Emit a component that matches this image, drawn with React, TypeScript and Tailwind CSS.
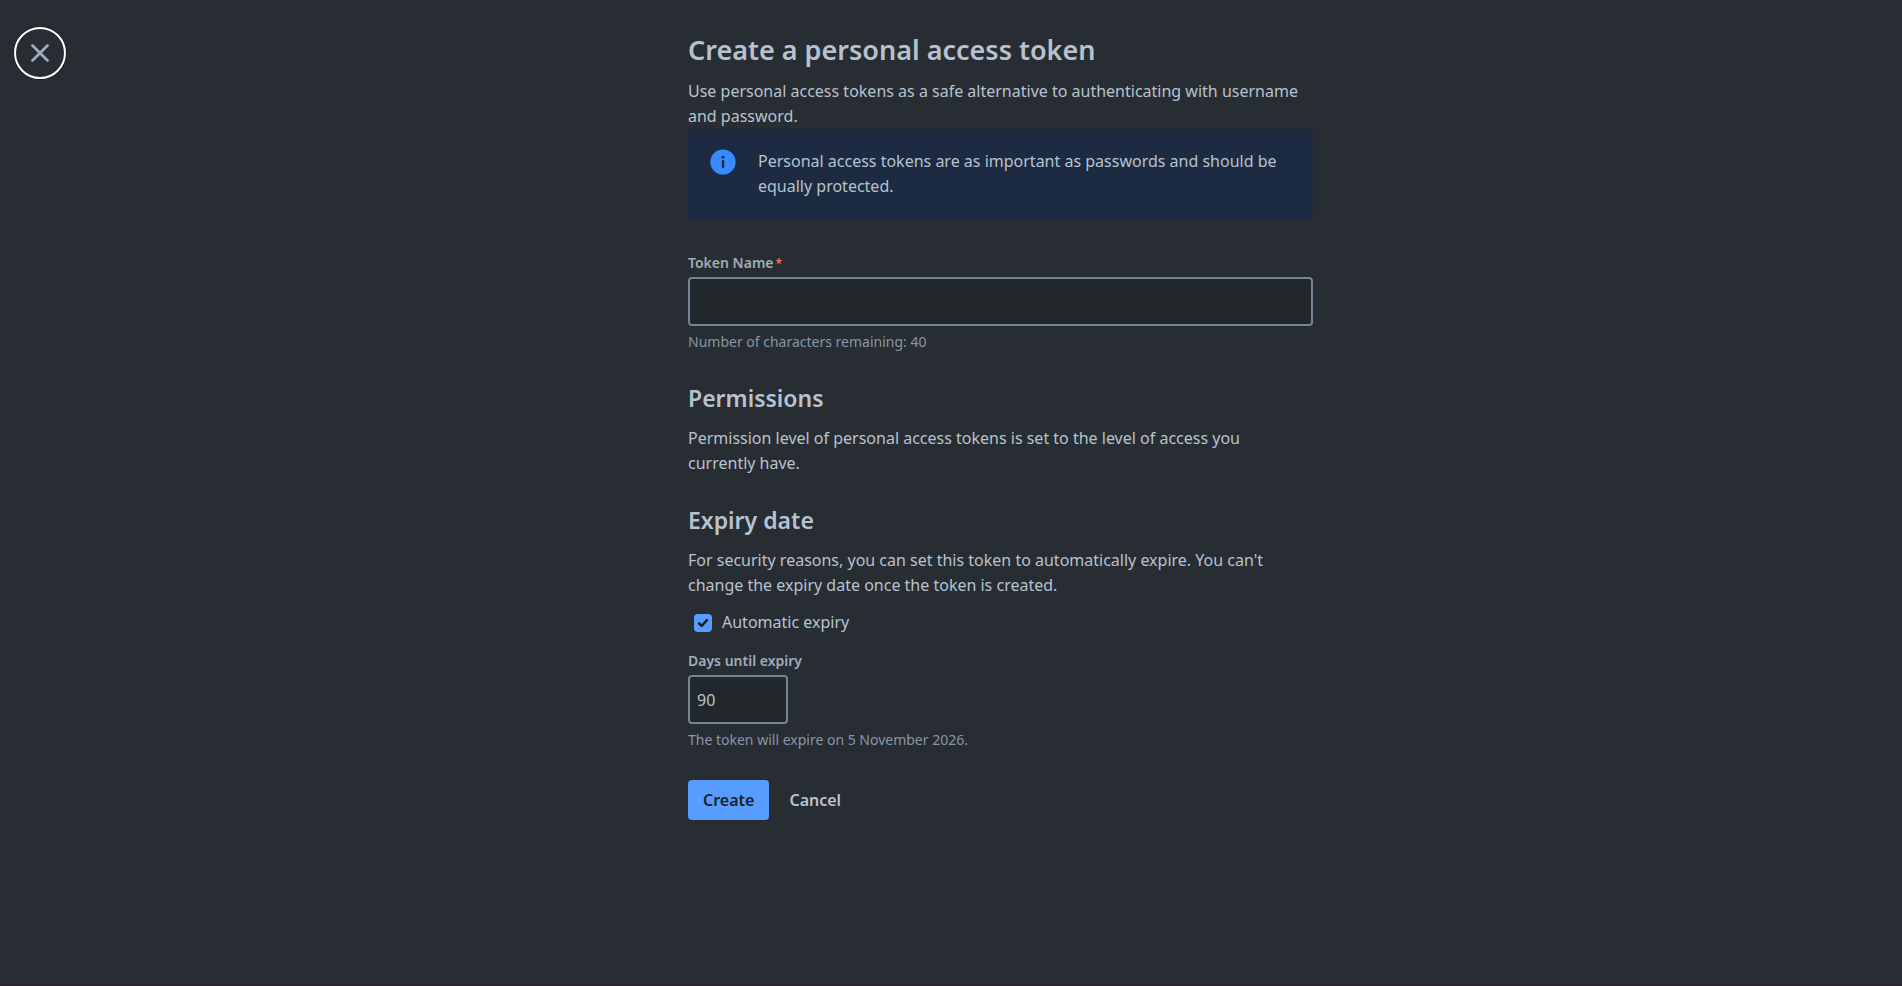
import { useState } from "react";
import type { ReactNode } from "react";

function CloseIcon() {
  return (
    <svg width="20" height="20" viewBox="0 0 20 20" fill="none" aria-hidden="true">
      <path d="M2.5 2.5l15 15M17.5 2.5l-15 15" stroke="#9fadbc" strokeWidth="2.7" strokeLinecap="round" />
    </svg>
  );
}

function InfoIcon() {
  return (
    <svg className="shrink-0" width="26" height="26" viewBox="0 0 26 26" aria-hidden="true">
      <circle cx="13" cy="13" r="12.6" fill="#388bff" />
      <circle cx="13" cy="8.2" r="1.4" fill="#1c2b41" />
      <rect x="11.8" y="11" width="2.5" height="8" rx="1" fill="#1c2b41" />
    </svg>
  );
}

function CheckIcon() {
  return (
    <svg
      className="pointer-events-none col-start-1 row-start-1 hidden peer-checked:block"
      width="18"
      height="18"
      viewBox="0 0 18 18"
      fill="none"
      aria-hidden="true"
    >
      <path d="M5 9.3l2.7 2.6L13 6.2" stroke="#1d2125" strokeWidth="2.6" strokeLinecap="round" strokeLinejoin="round" />
    </svg>
  );
}

function Section({ title, children }: { title: string; children: ReactNode }) {
  return (
    <section className="mt-7">
      <h2 className="text-[23px] leading-8 font-semibold text-[#b6c2cf]">{title}</h2>
      <p className="mt-3">{children}</p>
    </section>
  );
}

const labelClass = "block text-sm leading-5 font-semibold text-[#9fadbc]";
const inputClass =
  "mt-1 block h-[49px] rounded border-2 border-[#738496] bg-[#22272b] px-[7px] text-base text-[#b6c2cf] outline-none";
const hintClass = "mt-1 text-sm leading-6 text-[#8696a7]";

const MAX_LENGTH = 40;

export default function App() {
  const [name, setName] = useState("");
  const [autoExpiry, setAutoExpiry] = useState(true);
  const [days, setDays] = useState("90");

  return (
    <div className="flex min-h-screen border-b border-[#2a2432] bg-[#282d33] font-['Noto_Sans',sans-serif] text-base leading-[25px] text-[#b6c2cf]">
      <aside className="w-[99px] shrink-0 pt-[27px] pl-3.5">
        <button
          type="button"
          aria-label="Close"
          className="flex size-[52px] items-center justify-center rounded-full border-2 border-white ring-1 ring-[#1d2125]"
        >
          <CloseIcon />
        </button>
      </aside>

      <main className="flex grow justify-center">
        <div className="w-full max-w-[625px] pt-8">
          <h1 className="text-[27px] leading-9 font-semibold">Create a personal access token</h1>
          <p className="mt-[11px]">
            Use personal access tokens as a safe alternative to authenticating with username and
            password.
          </p>

          <div className="flex items-start gap-[22px] rounded bg-[#1c2b41] py-5 pr-5 pl-[22px]">
            <InfoIcon />
            <p>
              Personal access tokens are as important as passwords and should be equally protected.
            </p>
          </div>

          <form onSubmit={(e) => e.preventDefault()}>
            <div className="mt-[34px]">
              <label htmlFor="token-name" className={labelClass}>
                Token Name
                <span className="ml-0.5 text-xs text-[#f87168]">*</span>
              </label>
              <input
                id="token-name"
                type="text"
                maxLength={MAX_LENGTH}
                value={name}
                onChange={(e) => setName(e.target.value)}
                className={`${inputClass} w-full`}
              />
              <p className={hintClass}>
                Number of characters remaining: {MAX_LENGTH - name.length}
              </p>
            </div>

            <Section title="Permissions">
              Permission level of personal access tokens is set to the level of access you
              <br />
              currently have.
            </Section>

            <Section title="Expiry date">
              For security reasons, you can set this token to automatically expire. You can't
              <br />
              change the expiry date once the token is created.
            </Section>

            <label className="mt-3 flex items-center gap-2.5 pl-1.5">
              <span className="grid">
                <input
                  type="checkbox"
                  checked={autoExpiry}
                  onChange={(e) => setAutoExpiry(e.target.checked)}
                  className="peer col-start-1 row-start-1 size-[18px] appearance-none rounded border-2 border-[#738496] bg-[#22272b] checked:border-[#579dff] checked:bg-[#579dff]"
                />
                <CheckIcon />
              </span>
              Automatic expiry
            </label>

            <div className="mt-4">
              <label htmlFor="days" className={labelClass}>
                Days until expiry
              </label>
              <input
                id="days"
                type="text"
                value={days}
                onChange={(e) => setDays(e.target.value)}
                className={`${inputClass} w-25`}
              />
              <p className={hintClass}>The token will expire on 5 November 2026.</p>
            </div>

            <div className="mt-7 flex">
              <button type="submit" className="h-10 rounded bg-[#579dff] px-[15px] font-semibold text-[#1d2125]">
                Create
              </button>
              <button type="button" className="h-10 rounded px-5 font-semibold">
                Cancel
              </button>
            </div>
          </form>
        </div>
      </main>
    </div>
  );
}
